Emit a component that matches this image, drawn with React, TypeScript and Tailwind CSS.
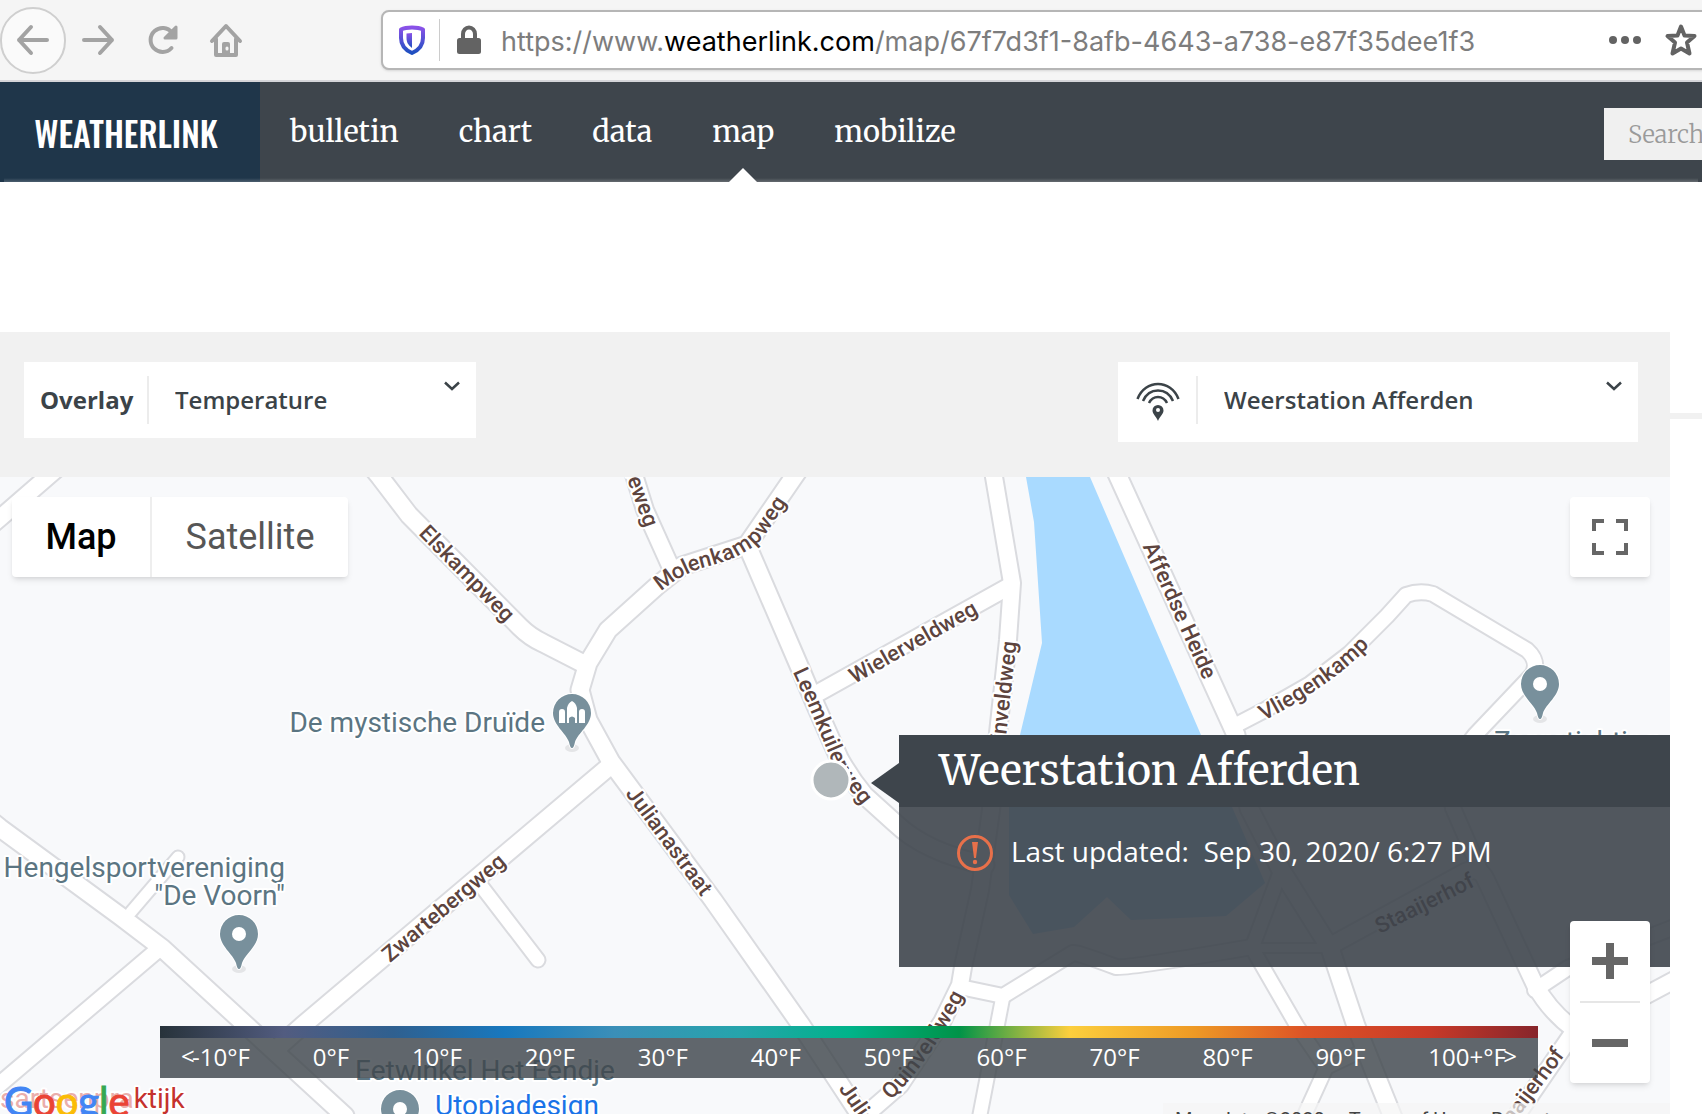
const navItems = ["bulletin", "chart", "data", "map", "mobilize"];

const legendLabels = [
  "-10°F",
  "0°F",
  "10°F",
  "20°F",
  "30°F",
  "40°F",
  "50°F",
  "60°F",
  "70°F",
  "80°F",
  "90°F",
  "100+°F",
];

const water =
  "M1026 470 L1026 477 L1034 522 L1042 643 L1020 735 L1009 807 L1009 895 L1033 934 L1074 927 L1107 897 L1131 920 L1226 916 L1265 883 L1232 807 L1201 735 L1130 570 L1090 477 Z";

const roads = [
  { d: "M60 466 L0 518 L-20 535", w: 16 },
  { d: "M368 462 L380 477 L409 515 L520 627 Q530 637 543 643 L582 663", w: 17 },
  { d: "M802 465 L747 545 L682 566 L658 585 L608 630 L588 663 L580 690 L588 720 L611 762 L713 900 L801 1025 L870 1130", w: 17 },
  { d: "M631 465 L645 510 L672 570", w: 16 },
  { d: "M747 545 L800 668 L816 706 L839 758 Q850 778 864 795 L895 823 Q925 852 985 865", w: 17 },
  { d: "M818 693 L1008 587", w: 16 },
  { d: "M992 465 L1012 583 L1008 640 L998 733 L991 810 L980 890 L963 967 L960 985 L942 1022 L900 1085 L862 1118", w: 16 },
  { d: "M960 987 L1003 996 L1073 953 Q1076 952 1116 967 Q1124 969 1252 947", w: 14 },
  { d: "M1003 996 L978 1125", w: 13 },
  { d: "M1113 465 L1236 735 L1249 808 L1281 870 L1330 948 L1356 1026 L1396 1125", w: 17 },
  { d: "M1281 870 L1252 948 L1297 1026 L1326 1068 L1300 1125", w: 13 },
  { d: "M1326 1068 L1364 1050", w: 12 },
  { d: "M1254 948 L1330 948", w: 8 },
  { d: "M1238 724 L1263 711 L1310 684 L1349 654 L1387 616 L1406 595 Q1420 590 1433 594 L1527 650 Q1540 662 1532 675 L1475 735 L1448 770 L1453 808 L1480 870", w: 14 },
  { d: "M1330 946 L1465 872 Q1480 866 1486 880 L1535 985 Q1550 1012 1575 1030 L1510 1125", w: 16 },
  { d: "M1535 990 L1568 968 L1680 925", w: 14 },
  { d: "M1680 977 L1590 1025 L1572 1035", w: 16 },
  { d: "M-10 820 L0 828 L120 916 L162 948 L247 1026 L345 1116", w: 17 },
  { d: "M160 948 L0 1084 L-10 1093", w: 15 },
  { d: "M131 912 L178 857", w: 11 },
  { d: "M611 765 L560 808 L302 1026 L275 1050", w: 17 },
  { d: "M482 887 L538 960", w: 13 },
];

const roadLabels = [
  { id: "elskampweg", d: "M409 515 L520 628", text: "Elskampweg", offset: "52%", anchor: "middle" },
  { id: "eweg", d: "M622 430 L634 478 L655 535", text: "Steneweg", offset: "91%", anchor: "end" },
  { id: "molenkampweg", d: "M650 592 Q675 568 705 560 Q745 550 760 530 L800 470", text: "Molenkampweg", offset: "9", anchor: "start" },
  { id: "leemkuilerweg", d: "M794 658 L816 706 L838 758 Q850 782 884 820", text: "Leemkuilerweg", offset: "12", anchor: "start" },
  { id: "wielerveldweg", d: "M821 695 L1002 592", text: "Wielerveldweg", offset: "51%", anchor: "middle" },
  { id: "quinveldweg-n", d: "M993 790 L1010 638", text: "Quinveldweg", offset: "98%", anchor: "end" },
  { id: "afferdse", d: "M1120 480 L1239 741", text: "Afferdse Heide", offset: "50%", anchor: "middle" },
  { id: "vliegenkamp", d: "M1254 718 Q1310 690 1349 656 L1390 616", text: "Vliegenkamp", offset: "7", anchor: "start" },
  { id: "juliana", d: "M620 775 L720 910", text: "Julianastraat", offset: "49%", anchor: "middle" },
  { id: "juliana-s", d: "M843 1083 L916 1190", text: "Julianastraat", offset: "2", anchor: "start" },
  { id: "zwarteberg", d: "M360 979 L528 837", text: "Zwartebergweg", offset: "50%", anchor: "middle" },
  { id: "quinveldweg-s", d: "M878 1103 Q925 1060 964 980", text: "Quinveldweg", offset: "11", anchor: "start" },
  { id: "staaijerhof-n", d: "M1372 930 L1484 874", text: "Staaijerhof", offset: "47%", anchor: "middle" },
  { id: "staaijerhof-s", d: "M1470 1165 L1515 1110 L1566 1042", text: "Staaijerhof", offset: "93%", anchor: "end" },
] as const;

const pins = [
  { x: 239, y: 915, kind: "dot" },
  { x: 572, y: 694, kind: "castle" },
  { x: 1540, y: 665, kind: "dot" },
  { x: 400, y: 1090, kind: "dot" },
];

const places = [
  { x: 545, y: 732, text: "De mystische Druïde", anchor: "end", fill: "#5b7582" },
  { x: 285, y: 877, text: "Hengelsportvereniging", anchor: "end", fill: "#5b7582" },
  { x: 285, y: 905, text: "\"De Voorn\"", anchor: "end", fill: "#5b7582" },
  { x: 355, y: 1080, text: "Eetwinkel Het Eendje", anchor: "start", fill: "#5b7582" },
  { x: 435, y: 1115, text: "Utopiadesign", anchor: "start", fill: "#1a73e8" },
  { x: 1494, y: 751, text: "Zorgstichting", anchor: "start", fill: "#5b7582" },
] as const;

function Pin({ x, y, kind }: { x: number; y: number; kind: string }) {
  return (
    <g transform={`translate(${x} ${y})`}>
      <ellipse cx="0" cy="54" rx="7" ry="4" fill="#000" opacity="0.08" />
      <path
        d="M0 54 C-1.500 54 -2 52 -3 48 C-6 39 -19 31 -19 19 A19 19 0 0 1 19 19 C19 31 6 39 3 48 C2 52 1.500 54 0 54 Z"
        fill="#78909c"
        stroke="#fff"
        strokeWidth="2"
        paintOrder="stroke"
      />
      {kind === "dot" ? (
        <circle cx="0" cy="19" r="7" fill="#fff" />
      ) : (
        <path
          d="M-13 29 V18 Q-13 15 -10 15 Q-7 15 -7 18 V29 Z M-5 29 V14 Q-4 9 0 7 Q4 9 5 14 V29 H3 V24 Q0 21 -3 24 V29 Z M7 29 V18 Q7 15 10 15 Q13 15 13 18 V29 Z"
          fill="#fff"
        />
      )}
    </g>
  );
}

function MapCanvas() {
  return (
    <svg
      className="absolute inset-0 h-full w-full font-['Roboto',sans-serif]"
      viewBox="0 477 1670 637"
      preserveAspectRatio="xMinYMin slice"
      aria-label="Street map"
    >
      <rect x="0" y="477" width="1670" height="637" fill="#f8f9fb" />
      <path d={water} fill="#a9daff" />
      <g fill="none" stroke="#dadbdf" strokeLinecap="round" strokeLinejoin="round">
        {roads.map((road) => (
          <path key={road.d} d={road.d} strokeWidth={road.w + 4} />
        ))}
      </g>
      <g fill="none" stroke="#fff" strokeLinecap="round" strokeLinejoin="round">
        {roads.map((road) => (
          <path key={road.d} d={road.d} strokeWidth={road.w} />
        ))}
      </g>
      <g
        fill="#5d443e"
        stroke="#fff"
        strokeWidth="4"
        strokeLinejoin="round"
        paintOrder="stroke"
        fontSize="22"
        fontWeight="500"
      >
        {roadLabels.map((label) => (
          <g key={label.id}>
            <path id={label.id} d={label.d} fill="none" stroke="none" />
            <text dy="7" textAnchor={label.anchor}>
              <textPath href={`#${label.id}`} startOffset={label.offset}>
                {label.text}
              </textPath>
            </text>
          </g>
        ))}
      </g>
      <g stroke="#fff" strokeWidth="4" strokeLinejoin="round" paintOrder="stroke" fontSize="28">
        {places.map((place) => (
          <text key={place.text} x={place.x} y={place.y} textAnchor={place.anchor} fill={place.fill}>
            {place.text}
          </text>
        ))}
        <text x="0" y="1108" fill="#c5322d">
          <tspan fill="#eaaeab">sartsenpra</tspan>ktijk
        </text>
      </g>
      {pins.map((pin) => (
        <Pin key={pin.x} {...pin} />
      ))}
      <circle cx="831" cy="780" r="19" fill="#b0b7ba" stroke="#fff" strokeWidth="3" />
    </svg>
  );
}

function BrowserBar() {
  return (
    <div className="flex h-[82px] shrink-0 items-center border-b-2 border-[#d5d5d9] bg-[#f5f5f5] text-[#a3a3a3]">
      <button
        aria-label="Back"
        className="flex h-[67px] w-[66px] shrink-0 items-center justify-center rounded-full border-2 border-[#cfcfcf] bg-[#fafafa]"
      >
        <svg width="34" height="34" viewBox="0 0 34 34" fill="none" stroke="currentColor" strokeWidth="4" strokeLinecap="round" strokeLinejoin="round">
          <path d="M31 17 H3 M15 4 L3 17 L15 30" />
        </svg>
      </button>
      <button aria-label="Forward" className="ml-4 flex w-8 shrink-0 justify-center">
        <svg width="34" height="34" viewBox="0 0 34 34" fill="none" stroke="currentColor" strokeWidth="4" strokeLinecap="round" strokeLinejoin="round" className="shrink-0">
          <path d="M3 17 H31 M19 4 L31 17 L19 30" />
        </svg>
      </button>
      <button aria-label="Reload" className="ml-8 shrink-0">
        <svg width="34" height="34" viewBox="0 0 34 34" fill="none" stroke="currentColor" strokeWidth="4" strokeLinecap="round">
          <path d="M25.500 25 A12 12 0 1 1 26 9.500" />
          <path d="M30 4 V15 H19 Z" fill="currentColor" strokeWidth="3" strokeLinejoin="round" />
        </svg>
      </button>
      <button aria-label="Home" className="ml-7 shrink-0">
        <svg width="36" height="36" viewBox="0 0 36 36" fill="none" stroke="currentColor" strokeWidth="4" strokeLinecap="round" strokeLinejoin="round">
          <path d="M4 19 L18 4 L32 19" />
          <path d="M8 17 V33 H28 V17" />
          <path d="M16 20 H20 Q22 20 22 22 V32 H14 V22 Q14 20 16 20 Z" fill="currentColor" stroke="none" />
          <path d="M19 26 V27" stroke="#f5f5f5" strokeWidth="3" />
        </svg>
      </button>
      <div className="-mr-2 ml-[137px] flex h-[60px] min-w-0 flex-1 items-center rounded-lg border-2 border-[#b6b6b6] bg-white pl-4 shadow-sm">
        <svg width="26" height="30" viewBox="0 0 26 30" className="shrink-0">
          <defs>
            <linearGradient id="shield" x1="0" y1="0" x2="0" y2="1">
              <stop offset="0" stopColor="#8a52e8" />
              <stop offset="1" stopColor="#1d4fc0" />
            </linearGradient>
          </defs>
          <path d="M13 2.500 C17 2.500 21 3 24 4.500 V13 C24 20 20 25 13 28 C6 25 2 20 2 13 V4.500 C5 3 9 2.500 13 2.500 Z" fill="none" stroke="url(#shield)" strokeWidth="4" strokeLinejoin="round" />
          <path d="M13 8 V23 C9 20 7.500 17 7.500 13 V8.500 Z" fill="url(#shield)" />
        </svg>
        <span className="ml-3.5 h-[42px] w-px shrink-0 bg-[#cccccc]" />
        <svg width="26" height="30" viewBox="0 0 26 30" className="ml-4 shrink-0 text-[#636363]">
          <path d="M7 14 V9 A6 6.500 0 0 1 19 9 V14" fill="none" stroke="currentColor" strokeWidth="4" />
          <rect x="1" y="13" width="24" height="16" rx="2.500" fill="currentColor" />
        </svg>
        <div
          role="textbox"
          aria-label="Address"
          className="ml-[19px] min-w-0 flex-1 overflow-hidden pt-1 font-['Inter',sans-serif] text-[27px] leading-10 whitespace-nowrap text-[#7d7d7d]"
        >
          https://www.<span className="text-black">weatherlink.com</span>/map/67f7d3f1-8afb-4643-a738-e87f35dee1f3
        </div>
        <button aria-label="Page actions" className="shrink-0 text-[#636363]">
          <svg width="34" height="10" viewBox="0 0 34 10" fill="currentColor">
            <circle cx="5" cy="5" r="4" />
            <circle cx="17" cy="5" r="4" />
            <circle cx="29" cy="5" r="4" />
          </svg>
        </button>
        <button aria-label="Bookmark" className="mr-2.5 ml-[22px] shrink-0 text-[#636363]">
          <svg width="34" height="34" viewBox="0 0 34 34" fill="none" stroke="currentColor" strokeWidth="4" strokeLinejoin="round">
            <path d="M17 3.500 L20.500 12.500 L30.500 13 L23 19.500 L25.500 30.500 L17 25.500 L8.500 30.500 L11 19.500 L3.500 13 L13.500 12.500 Z" />
          </svg>
        </button>
      </div>
    </div>
  );
}

function SiteHeader() {
  return (
    <header className="relative flex h-[100px] shrink-0 items-stretch overflow-hidden bg-[#3e454c]">
      <a
        href="#"
        className="flex w-[260px] shrink-0 items-center justify-center bg-[#1f364a] pr-2 font-['Oswald','Roboto_Condensed',sans-serif] text-[34px] font-medium text-white"
      >
        WEATHERLINK
      </a>
      <nav className="flex items-stretch gap-[60px] pl-[30px] font-['Merriweather','Noto_Serif','DejaVu_Serif',serif] text-[29px] text-white">
        {navItems.map((item) => (
          <a key={item} href="#" className="relative flex items-center">
            {item}
            {item === "map" && (
              <svg className="absolute bottom-0 left-1/2 -translate-x-1/2" width="28" height="14" viewBox="0 0 28 14">
                <path d="M14 0 L28 14 H0 Z" fill="#fff" />
              </svg>
            )}
          </a>
        ))}
      </nav>
      <input
        aria-label="Search"
        placeholder="Search"
        className="mt-[26px] -mr-24 ml-auto h-[52px] w-[194px] bg-[#f0f0f0] pl-6 font-['Merriweather','Liberation_Serif',serif] text-2xl font-light placeholder:text-[#9a9a9a]"
      />
      <span className="absolute inset-x-1 bottom-0 h-1 bg-linear-to-b from-transparent to-white/20" />
    </header>
  );
}

function Chevron() {
  return (
    <svg className="pointer-events-none absolute top-[19px] right-4" width="16" height="10" viewBox="0 0 16 10" fill="none" stroke="#3b4348" strokeWidth="2.500">
      <path d="M1 1.500 L8 8 L15 1.500" />
    </svg>
  );
}

function FilterBar() {
  return (
    <div className="flex h-[145px] items-start justify-between bg-[#f1f1f1] px-6 pt-[30px] pr-8 font-['Open_Sans','Noto_Sans',sans-serif] text-2xl text-[#3b4348]">
      <div className="relative flex h-[76px] w-[452px] items-center bg-white">
        <label htmlFor="overlay" className="w-[123px] pl-4 font-bold">
          Overlay
        </label>
        <span className="h-12 w-0.5 bg-[#ececec]" />
        <select id="overlay" className="h-full flex-1 appearance-none pl-[26px] font-semibold">
          <option>Temperature</option>
        </select>
        <Chevron />
      </div>
      <div className="relative flex h-20 w-[520px] items-center bg-white pb-1">
        <label htmlFor="station" aria-label="Station" className="w-[78px] pt-1 pl-[18px]">
          <svg width="44" height="40" viewBox="0 0 44 40" fill="none" stroke="#3b4348" strokeWidth="2.500">
            <path d="M1.500 17 C9 -3 35 -3 42.500 17" />
            <path d="M7 19 C13 5 31 5 37 19" />
            <path d="M13 21 C17 13 27 13 31 21" />
            <path d="M22 23 A5.500 5.500 0 0 0 16.500 28.500 C16.500 32 20 34 22 39 C24 34 27.500 32 27.500 28.500 A5.500 5.500 0 0 0 22 23 Z" fill="#3b4348" stroke="none" />
            <circle cx="22" cy="28" r="2" fill="#fff" stroke="none" />
          </svg>
        </label>
        <span className="h-12 w-0.5 bg-[#ececec]" />
        <select id="station" className="h-full flex-1 appearance-none pl-[26px] font-semibold">
          <option>Weerstation Afferden</option>
        </select>
        <Chevron />
      </div>
    </div>
  );
}

function StationPopup() {
  return (
    <div className="absolute top-[258px] right-0 left-[899px] text-white">
      <svg className="absolute top-7 -left-7" width="28" height="40" viewBox="0 0 28 40">
        <path d="M28 0 V40 L0 20 Z" fill="#3e454c" />
      </svg>
      <h2 className="flex h-[72px] items-center bg-[#3e454c] pl-10 font-['Merriweather','Noto_Serif','DejaVu_Serif',serif] text-[41px]">
        Weerstation Afferden
      </h2>
      <div className="flex h-40 items-start bg-[#3e454c]/90 pt-[26px] pl-[58px] font-['Open_Sans','Noto_Sans',sans-serif] text-[28px] leading-9">
        <svg width="36" height="40" viewBox="0 0 36 40" className="shrink-0">
          <circle cx="18" cy="20" r="16.500" fill="none" stroke="#e8704a" strokeWidth="3" />
          <path d="M15 9 H21 L19 25 H17 Z" fill="#e8704a" />
          <circle cx="18" cy="29" r="2.200" fill="#e8704a" />
        </svg>
        <p className="ml-[18px] whitespace-pre">Last updated:  Sep 30, 2020/ 6:27 PM</p>
      </div>
    </div>
  );
}

function Legend() {
  return (
    <div className="absolute top-[549px] right-[132px] left-[160px] font-['Open_Sans','Noto_Sans',sans-serif] text-2xl text-white">
      <div className="h-3 bg-[linear-gradient(to_right,#27323a_0%,#525c80_9%,#2f6090_17%,#1878be_25%,#3b8fb8_33%,#26a4ac_42%,#00b38a_50%,#009348_58%,#fccf3d_66%,#ee9a25_75%,#dd5426_83%,#c93a28_92%,#87252b_100%)]" />
      <div className="flex h-10 items-center justify-between bg-[#3e454c]/82 px-8 pb-0.5">
        {legendLabels.map((label) => (
          <span key={label}>{label}</span>
        ))}
      </div>
      <span className="absolute top-3.5 left-[21px]">&lt;</span>
      <span className="absolute top-3.5 right-[21px]">&gt;</span>
    </div>
  );
}

function MapControls() {
  return (
    <>
      <div className="absolute top-5 left-3 flex h-20 overflow-hidden rounded bg-white font-['Roboto',sans-serif] text-4xl shadow-md">
        <button className="w-[138px] font-medium text-black">Map</button>
        <button className="w-[198px] border-l-2 border-[#eeeeee] text-[#565656]">Satellite</button>
      </div>
      <button
        aria-label="Toggle fullscreen"
        className="absolute top-5 right-5 flex size-20 items-center justify-center rounded bg-white shadow-md"
      >
        <svg width="36" height="36" viewBox="0 0 36 36" fill="none" stroke="#666" strokeWidth="4">
          <path d="M2 12 V2 H12 M24 2 H34 V12 M34 24 V34 H24 M12 34 H2 V24" />
        </svg>
      </button>
      <div className="absolute top-[444px] right-5 flex w-20 flex-col items-center rounded bg-white shadow-md">
        <button aria-label="Zoom in" className="flex h-20 w-full items-center justify-center">
          <svg width="36" height="36" viewBox="0 0 36 36" stroke="#666" strokeWidth="8">
            <path d="M0 18 H36 M18 0 V36" />
          </svg>
        </button>
        <span className="h-0.5 w-[60px] bg-[#e6e6e6]" />
        <button aria-label="Zoom out" className="flex h-20 w-full items-center justify-center">
          <svg width="36" height="36" viewBox="0 0 36 36" stroke="#666" strokeWidth="8">
            <path d="M0 18 H36" />
          </svg>
        </button>
      </div>
    </>
  );
}

function Attribution() {
  return (
    <>
      <a
        href="#"
        aria-label="Google"
        className="absolute top-[600px] left-1 font-['Lato',sans-serif] text-[40px] leading-[48px] [-webkit-text-stroke:1px]"
      >
        <span className="text-[#4285f4]">G</span>
        <span className="text-[#ea4335]">o</span>
        <span className="text-[#fbbc05]">o</span>
        <span className="text-[#4285f4]">g</span>
        <span className="text-[#34a853]">l</span>
        <span className="text-[#ea4335]">e</span>
      </a>
      <div className="absolute top-[626px] right-0 flex font-['Roboto',sans-serif] text-xl leading-[34px] whitespace-nowrap text-[#444]">
        <span className="bg-[#f5f5f5]/70 px-3">Map data ©2020</span>
        <a href="#" className="bg-[#f5f5f5]/70 px-3">
          Terms of Use
        </a>
        <a href="#" className="bg-[#f5f5f5]/70 px-3">
          Report a map error
        </a>
      </div>
    </>
  );
}

export default function App() {
  return (
    <div className="flex h-screen flex-col overflow-hidden bg-white">
      <BrowserBar />
      <SiteHeader />
      <div className="flex min-h-0 flex-1 pt-[150px]">
        <main className="flex min-w-0 flex-1 flex-col">
          <FilterBar />
          <section className="relative min-h-0 flex-1 overflow-hidden bg-[#f8f9fb]">
            <MapCanvas />
            <Legend />
            <StationPopup />
            <Attribution />
            <MapControls />
          </section>
        </main>
        <aside className="w-8 shrink-0 pt-[81px]">
          <hr className="border-t-[6px] border-[#f1f1f1]" />
        </aside>
      </div>
    </div>
  );
}
